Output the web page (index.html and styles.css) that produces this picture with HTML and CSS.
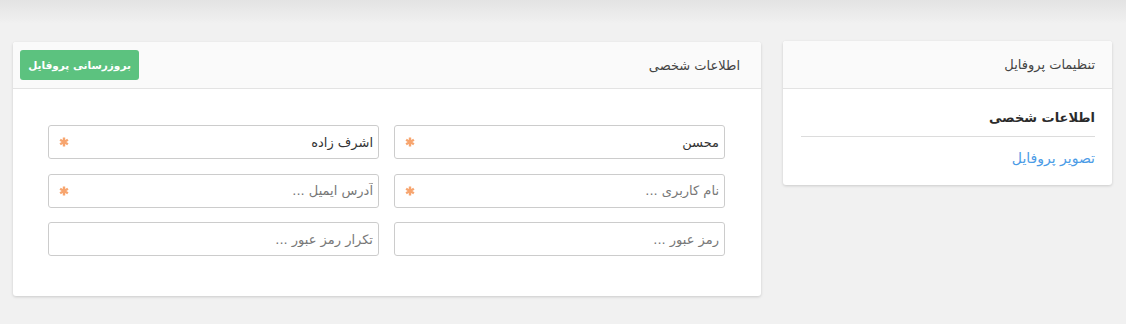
FILE: index.html
```html
<!DOCTYPE html>
<html lang="fa" dir="rtl">
<head>
<meta charset="utf-8">
<title>پروفایل</title>
<link rel="stylesheet" href="styles.css">
</head>
<body>
<div class="page">
  <aside class="card side">
    <div class="card-head side-head">تنظیمات پروفایل</div>
    <div class="side-body">
      <div class="side-title">اطلاعات شخصی</div>
      <div class="side-sep"></div>
      <a class="side-link" href="#">تصویر پروفایل</a>
    </div>
  </aside>
  <main class="card main">
    <div class="card-head main-head">
      <span class="main-title">اطلاعات شخصی</span>
      <button class="btn-save">بروزرسانی پروفایل</button>
    </div>
    <div class="main-body">
      <div class="form-grid">
        <div class="field"><input class="inp" type="text" value="محسن"><span class="req"><svg viewBox="0 0 10 10" width="10" height="10"><g stroke="#f7a56f" stroke-width="2.4"><line x1="5" y1="0.5" x2="5" y2="9.5"/><line x1="1.1" y1="2.75" x2="8.9" y2="7.25"/><line x1="1.1" y1="7.25" x2="8.9" y2="2.75"/></g></svg></span></div>
        <div class="field"><input class="inp" type="text" value="اشرف زاده"><span class="req"><svg viewBox="0 0 10 10" width="10" height="10"><g stroke="#f7a56f" stroke-width="2.4"><line x1="5" y1="0.5" x2="5" y2="9.5"/><line x1="1.1" y1="2.75" x2="8.9" y2="7.25"/><line x1="1.1" y1="7.25" x2="8.9" y2="2.75"/></g></svg></span></div>
        <div class="field"><input class="inp" type="text" placeholder="نام کاربری ..."><span class="req"><svg viewBox="0 0 10 10" width="10" height="10"><g stroke="#f7a56f" stroke-width="2.4"><line x1="5" y1="0.5" x2="5" y2="9.5"/><line x1="1.1" y1="2.75" x2="8.9" y2="7.25"/><line x1="1.1" y1="7.25" x2="8.9" y2="2.75"/></g></svg></span></div>
        <div class="field"><input class="inp" type="text" placeholder="آدرس ایمیل ..."><span class="req"><svg viewBox="0 0 10 10" width="10" height="10"><g stroke="#f7a56f" stroke-width="2.4"><line x1="5" y1="0.5" x2="5" y2="9.5"/><line x1="1.1" y1="2.75" x2="8.9" y2="7.25"/><line x1="1.1" y1="7.25" x2="8.9" y2="2.75"/></g></svg></span></div>
        <div class="field"><input class="inp" type="password" placeholder="رمز عبور ..."></div>
        <div class="field"><input class="inp" type="password" placeholder="تکرار رمز عبور ..."></div>
      </div>
    </div>
  </main>
</div>
</body>
</html>
```
FILE: styles.css
```css
html, body {
  margin: 0;
  padding: 0;
}
body {
  background: linear-gradient(to bottom, #e3e3e3 0, #f1f1f1 24px, #f1f1f1 100%);
  background-color: #f1f1f1;
  font-family: "DejaVu Sans", "Noto Sans", sans-serif;
  color: #333;
  min-height: 324px;
}
.page {
  display: flex;
  direction: rtl;
  align-items: flex-start;
  gap: 22px;
  padding: 41px 14px 0 13px;
}
.card {
  background: #fff;
  border-radius: 3px;
  box-shadow: 0 1px 3px rgba(0, 0, 0, 0.16);
  overflow: hidden;
}
.card-head {
  background: #fafafa;
  border-bottom: 1px solid #e3e3e3;
  font-size: 13px;
  color: #444;
}
.side {
  width: 329px;
  flex: none;
}
.side-head {
  height: 48px;
  box-sizing: border-box;
  padding: 0 17px;
  display: flex;
  align-items: center;
}
.side-body {
  padding: 19px 17px 17px 18px;
}
.side-title {
  font-size: 13px;
  font-weight: bold;
  line-height: 20px;
  color: #2b2b2b;
}
.side-sep {
  height: 1px;
  background: #dcdcdc;
  margin: 8px 0 11px;
}
.side-link {
  display: block;
  font-size: 14px;
  line-height: 20px;
  color: #4b9be6;
  text-decoration: none;
}
.main {
  flex: 1;
  margin-top: 1px;
}
.main-head {
  display: flex;
  align-items: center;
  justify-content: space-between;
  height: 47px;
  box-sizing: border-box;
  padding: 0 21px 0 7px;
}
.btn-save {
  height: 30px;
  width: 119px;
  border: none;
  border-radius: 3px;
  background: #5cc27f;
  color: #fff;
  font-family: "DejaVu Sans", sans-serif;
  font-size: 10.5px;
  font-weight: bold;
  padding: 0;
}
.main-body {
  padding: 36px 36px 40px 35px;
}
.form-grid {
  display: grid;
  grid-template-columns: 1fr 1fr;
  column-gap: 15px;
  row-gap: 14.5px;
}
.field {
  position: relative;
}
.inp {
  display: block;
  width: 100%;
  height: 34px;
  box-sizing: border-box;
  border: 1px solid #cccccc;
  border-radius: 3px;
  padding: 0 5px 0 30px;
  direction: rtl;
  text-align: right;
  font-family: "DejaVu Sans", sans-serif;
  font-size: 13px;
  color: #333;
  background: #fff;
}
.inp::placeholder {
  color: #777;
}
.req {
  position: absolute;
  left: 11px;
  top: 12px;
  width: 10px;
  height: 10px;
  line-height: 0;
}
```
